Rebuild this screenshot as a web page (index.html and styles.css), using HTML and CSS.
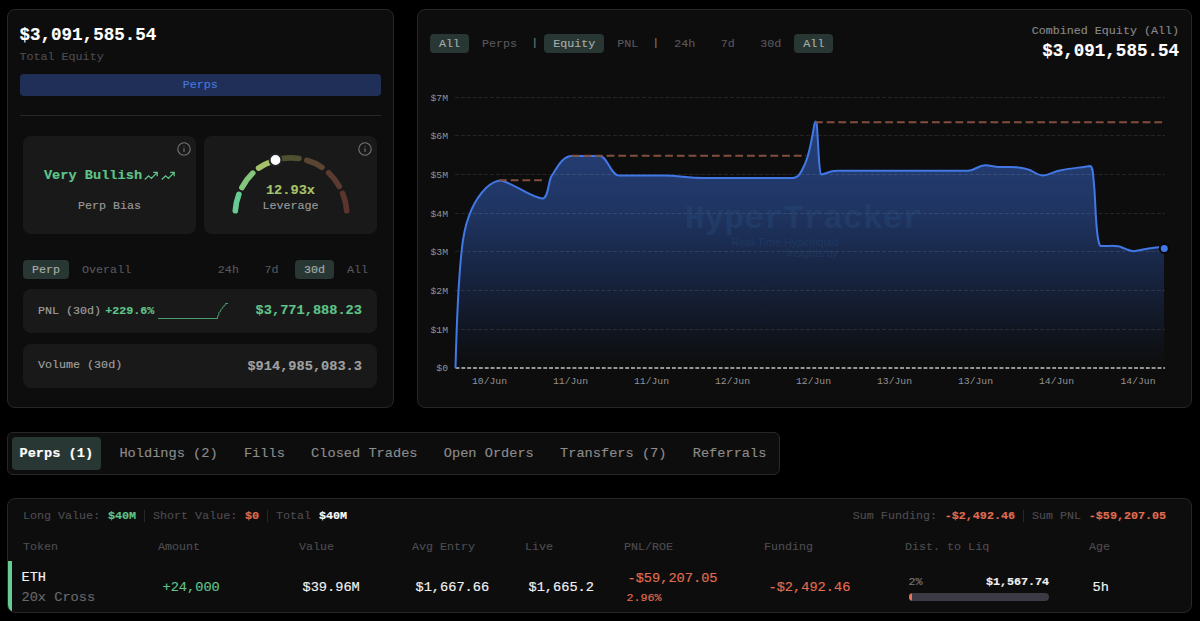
FILE: index.html
```html
<!DOCTYPE html>
<html lang="en">
<head>
  <meta charset="utf-8" />
  <meta name="viewport" content="width=device-width, initial-scale=1.0" />
  <title>HyperTracker</title>
  <link rel="stylesheet" href="styles.css">
</head>
<body>
  <main>
    <div class="top-row">
      <section class="panel summary">
        <div class="equity-value">$3,091,585.54</div>
        <div class="equity-label">Total Equity</div>
        <div class="split-bar">Perps</div>
        <hr>

        <div class="stat-cards">
          <div class="stat-card bias">
            <svg class="info" viewBox="0 0 14 14">
              <circle cx="7" cy="7" r="6.2" />
              <path d="M7 6.3V10M7 4v.8" />
            </svg>
            <div class="bias-value">
              <span>Very Bullish</span>
              <svg class="trend" viewBox="0 0 14 10"><path d="M.8 8.5 4.6 4.8 7.4 7.4 13 1.6M9.2 1.4H13.2V5.2" /></svg>
              <svg class="trend" viewBox="0 0 14 10"><path d="M.8 8.5 4.6 4.8 7.4 7.4 13 1.6M9.2 1.4H13.2V5.2" /></svg>
            </div>
            <div class="stat-label">Perp Bias</div>
          </div>

          <div class="stat-card leverage">
            <svg class="info" viewBox="0 0 14 14">
              <circle cx="7" cy="7" r="6.2" />
              <path d="M7 6.3V10M7 4v.8" />
            </svg>
            <svg class="gauge" viewBox="231 153 120 62">
              <path stroke="#66cc91" d="M235.3 210.8A56 56 0 0 1 238.9 194.3" />
              <path stroke="#84c67c" d="M241.9 187.6A56 56 0 0 1 252.8 173.1" />
              <path stroke="#a5c26a" d="M258.6 168.1A56 56 0 0 1 272 161.3" />
              <path stroke="#4f5030" d="M281 158.8A56 56 0 0 1 299 158.4" />
              <path stroke="#594530" d="M306.8 160.3A56 56 0 0 1 322 167.3" />
              <path stroke="#5b3b30" d="M328.6 172.8A56 56 0 0 1 339.2 186.3" />
              <path stroke="#5c342e" d="M342.7 193.4A56 56 0 0 1 346.7 210.8" />
              <circle cx="275.5" cy="160" r="5.9" />
            </svg>
            <div class="leverage-value">12.93x</div>
            <div class="stat-label">Leverage</div>
          </div>
        </div>

        <div class="filters">
          <span class="pill active">Perp</span>
          <span class="pill">Overall</span>
          <span class="spacer"></span>
          <span class="pill">24h</span>
          <span class="pill">7d</span>
          <span class="pill active">30d</span>
          <span class="pill">All</span>
        </div>

        <div class="metric">
          <span>PNL (30d)</span>
          <span class="metric-change">+229.6%</span>
          <svg class="spark" viewBox="0 0 70 18">
            <path d="M0 16.5H59.5V14L60.8 13.5V10.500L62.500 9.5L62.800 7.500L64.500 6.500L65 4.500L67 3.5L67.500 1.5H70" />
          </svg>
          <span class="metric-value up">$3,771,888.23</span>
        </div>
        <div class="metric volume">
          <span>Volume (30d)</span>
          <span class="metric-value">$914,985,083.3</span>
        </div>
      </section>

      <section class="panel chart-panel">
        <div class="chart-head">
          <div class="filters">
            <span class="pill active">All</span>
            <span class="pill">Perps</span>
            <span class="sep">|</span>
            <span class="pill active">Equity</span>
            <span class="pill">PNL</span>
            <span class="sep">|</span>
            <span class="pill">24h</span>
            <span class="pill">7d</span>
            <span class="pill">30d</span>
            <span class="pill active">All</span>
          </div>
          <div class="combined">
            <div class="combined-label">Combined Equity (All)</div>
            <div class="equity-value">$3,091,585.54</div>
          </div>
        </div>

        <svg class="chart" viewBox="418 80 773 320">
          <defs>
            <linearGradient id="area" x1="0" y1="122" x2="0" y2="368" gradientUnits="userSpaceOnUse">
              <stop offset="0" stop-color="#264079" />
              <stop offset="0.35" stop-color="#1f3563" />
              <stop offset="0.62" stop-color="#172441" />
              <stop offset="0.85" stop-color="#10151f" />
              <stop offset="1" stop-color="#0d0d0d" />
            </linearGradient>
          </defs>
          <path class="area" d="M455.5 368C457 310 459 268 463 240C467 214 475 199 486 188C492 182.5 496 180.5 501 180.5C513 183 530 197 542 198.5C548 199.5 548 184 551 177C557 168 562 156 572 156H600C607 156 611 175.5 619 175.5H664C680 175.5 686 178 704 178H793C799 178 801 172 805 164C810 153 812 137 814.5 124Q815.7 119 816.8 124C818.5 147 819 174 821.5 174.5C826 174 829 170.7 837 170.7H968C975 170.7 978 165.3 985 165.3C992 165.3 995 167.3 1003 167C1015 166.5 1023 167 1031 170.5C1035 173 1039 175.5 1043 175.5C1049 175.5 1053 171.5 1061 170.2C1072 168 1082 167.5 1090 166C1093 166 1093 174 1094.5 190C1096 216 1096 233 1099 243C1100 247 1101 246 1104 246C1113 246 1117 245 1122 247.5C1127 249.5 1130 251.2 1134 251.2C1143 250 1152 246.7 1164 247V368Z" />
          <g class="grid">
            <path d="M455 97.5H1165M455 135.5H1165M455 174.5H1165M455 213.5H1165M455 251.5H1165M455 290.5H1165M455 329.5H1165" />
          </g>
          <g class="watermark">
            <text x="803.5" y="228" class="watermark-name">HyperTracker</text>
            <text x="838" y="245.5" class="watermark-sub">Real-Time Hyperliquid</text>
            <text x="838" y="256.5" class="watermark-sub">Insights by</text>
          </g>
          <path class="axis" d="M455.5 368H1165" />
          <path class="line" d="M455.5 368C457 310 459 268 463 240C467 214 475 199 486 188C492 182.5 496 180.5 501 180.5C513 183 530 197 542 198.5C548 199.5 548 184 551 177C557 168 562 156 572 156H600C607 156 611 175.5 619 175.5H664C680 175.5 686 178 704 178H793C799 178 801 172 805 164C810 153 812 137 814.5 124Q815.7 119 816.8 124C818.5 147 819 174 821.5 174.5C826 174 829 170.7 837 170.7H968C975 170.7 978 165.3 985 165.3C992 165.3 995 167.3 1003 167C1015 166.5 1023 167 1031 170.5C1035 173 1039 175.5 1043 175.5C1049 175.5 1053 171.5 1061 170.2C1072 168 1082 167.5 1090 166C1093 166 1093 174 1094.5 190C1096 216 1096 233 1099 243C1100 247 1101 246 1104 246C1113 246 1117 245 1122 247.5C1127 249.5 1130 251.2 1134 251.2C1143 250 1152 246.7 1164 247" />
          <path class="peak" d="M499 180.3H544M571.5 155.7H806M815 122.3H1163" />
          <circle class="marker" cx="1164.3" cy="248.6" r="4.5" />
          <g class="y-labels">
            <text x="448" y="100.5">$7M</text>
            <text x="448" y="139">$6M</text>
            <text x="448" y="177.5">$5M</text>
            <text x="448" y="216.5">$4M</text>
            <text x="448" y="255">$3M</text>
            <text x="448" y="293.5">$2M</text>
            <text x="448" y="332.5">$1M</text>
            <text x="448" y="371">$0</text>
          </g>
          <g class="x-labels">
            <text x="489.5" y="384">10/Jun</text>
            <text x="570.5" y="384">11/Jun</text>
            <text x="651.5" y="384">11/Jun</text>
            <text x="732.5" y="384">12/Jun</text>
            <text x="813.5" y="384">12/Jun</text>
            <text x="894.5" y="384">13/Jun</text>
            <text x="975.5" y="384">13/Jun</text>
            <text x="1056.5" y="384">14/Jun</text>
            <text x="1138" y="384">14/Jun</text>
          </g>
        </svg>
      </section>
    </div>

    <nav class="panel tabs">
      <span class="tab active">Perps (1)</span>
      <span class="tab">Holdings (2)</span>
      <span class="tab">Fills</span>
      <span class="tab">Closed Trades</span>
      <span class="tab">Open Orders</span>
      <span class="tab">Transfers (7)</span>
      <span class="tab">Referrals</span>
    </nav>

    <section class="panel positions">
      <div class="totals">
        <span>Long Value: <b class="up">$40M</b></span>
        <span>Short Value: <b class="down">$0</b></span>
        <span>Total <b>$40M</b></span>
        <span class="push">Sum Funding: <b class="down">-$2,492.46</b></span>
        <span>Sum PNL <b class="down">-$59,207.05</b></span>
      </div>
      <div class="row head">
        <span>Token</span>
        <span>Amount</span>
        <span>Value</span>
        <span>Avg Entry</span>
        <span>Live</span>
        <span>PNL/ROE</span>
        <span>Funding</span>
        <span>Dist. to Liq</span>
        <span>Age</span>
      </div>
      <div class="row position">
        <div class="token">ETH<small>20x Cross</small></div>
        <div class="up">+24,000</div>
        <div>$39.96M</div>
        <div>$1,667.66</div>
        <div>$1,665.2</div>
        <div class="roe down">-$59,207.05<small>2.96%</small></div>
        <div class="down">-$2,492.46</div>
        <div class="liq">
          <div class="liq-text"><span>2%</span><b>$1,567.74</b></div>
          <div class="liq-bar"><div class="liq-fill" style="width: 2.5%"></div></div>
        </div>
        <div>5h</div>
      </div>
    </section>
  </main>
</body>
</html>
```
FILE: styles.css
```css
/* Base */
* {
  box-sizing: border-box;
}

body {
  margin: 0;
  height: 621px;
  overflow: hidden;
  background: #000;
  color: #f2f2f2;
  font-family: "Liberation Mono", monospace;
  font-size: 11.7px;
  line-height: 16px;
  -webkit-text-stroke: 0.15px;
}

main {
  padding: 9px 8px 8px 7px;
}

.panel {
  background: #0d0d0d;
  border: 1px solid #272727;
  border-radius: 8px;
}

.up {
  color: #5fc48a;
}

.down {
  color: #e06d50;
}

.top-row {
  display: flex;
  justify-content: space-between;
  height: 399px;
}

/* Summary */
.summary {
  width: 387px;
  padding: 13px 12px 0 11.5px;
}

.equity-value {
  font-size: 17.55px;
  font-weight: 700;
  line-height: 24px;
  color: #fff;
}

.equity-label {
  margin-top: 2px;
  color: #4c4c50;
}

.split-bar {
  margin-top: 9px;
  height: 22px;
  line-height: 23px;
  text-align: center;
  border-radius: 4px;
  background: #1f2f57;
  color: #4678dc;
}

hr {
  margin: 19px 0 20px;
  border: 0;
  border-top: 1px solid #272727;
}

.stat-cards {
  display: flex;
  gap: 8px;
  margin: 0 4px 0 3.5px;
}

.stat-card {
  position: relative;
  flex: 1;
  height: 98px;
  border-radius: 8px;
  background: #191919;
  text-align: center;
}

.info {
  position: absolute;
  top: 6px;
  right: 5px;
  width: 14px;
  height: 14px;
  fill: none;
  stroke: #747474;
  stroke-width: 1.1;
}

.bias-value {
  display: flex;
  justify-content: center;
  align-items: center;
  gap: 2px;
  margin: 31px 0 13px;
  font-size: 13.65px;
  font-weight: 700;
  line-height: 18px;
  color: #5fc48a;
}

.trend {
  width: 14px;
  height: 10px;
  fill: none;
  stroke: #5fc48a;
  stroke-width: 1.3;
}

.trend + .trend {
  margin-left: 1px;
}

.stat-label {
  color: #9a9a9a;
}

.gauge {
  position: absolute;
  left: 26.5px;
  top: 17px;
  width: 120px;
  height: 62px;
  overflow: visible;
  fill: none;
  stroke-width: 5.6;
  stroke-linecap: round;
}

.gauge circle {
  fill: #fff;
  stroke: #21222a;
  stroke-width: 2;
}

.leverage-value {
  margin-top: 47px;
  font-size: 13.65px;
  font-weight: 700;
  line-height: 15px;
  color: #a5c26a;
}

.filters {
  display: flex;
  align-items: center;
}

.summary .filters {
  margin: 26px 4px 10px 3.5px;
}

.pill {
  min-width: 39px;
  height: 19px;
  padding: 0 9px;
  line-height: 20px;
  text-align: center;
  border-radius: 4px;
  color: #57575a;
}

.pill + .pill {
  margin-left: 4px;
}

.pill.active {
  background: #283733;
  color: #a6adaa;
}

.spacer {
  flex: 1;
}

.metric {
  display: flex;
  align-items: center;
  height: 44px;
  margin: 0 4px 11px 3.5px;
  padding: 0 15px;
  border-radius: 8px;
  background: #191919;
  color: #a0a0a0;
}

.metric-change {
  margin-left: 4px;
  font-weight: 700;
  color: #5fc48a;
}

.spark {
  width: 70px;
  height: 18px;
  margin-left: 4px;
  fill: none;
  stroke: #4aa06c;
  stroke-width: 1;
}

.metric-value {
  margin-left: auto;
  font-size: 13.65px;
  font-weight: 700;
}

.volume {
  align-items: flex-start;
  padding-top: 13px;
}

.volume .metric-value {
  padding-top: 2px;
}

/* Chart */
.chart-panel {
  width: 775px;
}

.chart-head {
  display: flex;
  justify-content: space-between;
  height: 70px;
  padding: 12px 12px 0;
}

.chart-head .filters {
  height: 42px;
}

.sep {
  width: 7px;
  margin: 0 6px 0 5px;
  color: #77777a;
}

.combined {
  padding-top: 1px;
  text-align: right;
}

.combined-label {
  color: #88888a;
}

.chart {
  display: block;
  width: 773px;
  height: 320px;
}

.area {
  fill: url(#area);
}

.grid {
  fill: none;
  stroke: #fff;
  stroke-opacity: 0.1;
  stroke-dasharray: 3.9 1.95;
}

.axis {
  stroke: #c4c4c4;
  stroke-width: 1.5;
  stroke-dasharray: 3.9 1.95;
}

.line {
  fill: none;
  stroke: #4178e6;
  stroke-width: 2;
}

.peak {
  fill: none;
  stroke: #834d3e;
  stroke-width: 1.9;
  stroke-dasharray: 7.8 3.9;
}

.marker {
  fill: #4178e6;
  stroke: #05070d;
  stroke-width: 2;
}

.y-labels,
.x-labels {
  font-size: 9.75px;
  fill: #929292;
}

.y-labels {
  text-anchor: end;
}

.x-labels {
  text-anchor: middle;
}

.watermark {
  fill: #294f7d;
  opacity: 0.35;
}

.watermark-name {
  font-size: 33px;
  font-weight: 700;
  text-anchor: middle;
}

.watermark-sub {
  font-family: "Liberation Sans", sans-serif;
  font-size: 10.8px;
  text-anchor: end;
}

/* Tabs */
.tabs {
  display: flex;
  align-items: center;
  width: 773px;
  height: 43px;
  margin-top: 24px;
  padding: 0 4px 0 3.5px;
  border-radius: 6px;
}

.tab {
  height: 33px;
  padding: 0 8px;
  font-size: 13.65px;
  line-height: 34px;
  border-radius: 4px;
  color: #8b8b8b;
}

.tab + .tab {
  margin-left: 10.25px;
}

.tab.active {
  background: #283733;
  color: #fff;
  font-weight: 700;
}

/* Positions table */
.positions {
  height: 115px;
  margin-top: 23px;
  overflow: hidden;
}

.totals {
  display: flex;
  padding: 9px 25px 0 15px;
  color: #4c4c50;
}

.totals span + span {
  position: relative;
  margin-left: 17px;
}

.totals span + span::before {
  content: "";
  position: absolute;
  left: -9px;
  top: 2px;
  width: 1px;
  height: 12px;
  background: #272727;
}

.totals .push.push {
  margin-left: auto;
}

.totals .push::before {
  display: none;
}

.totals b {
  margin-left: 0.8px;
}

.totals b:not([class]) {
  color: #fff;
}

.row {
  display: grid;
}

.head {
  grid-template-columns: 135px 141px 113px 113px 99px 140px 141px 184px 1fr;
  padding: 15px 0 0 15px;
  color: #4c4c50;
}

.position {
  grid-template-columns: 141px 140px 113px 113px 99px 141px 140px 184px 1fr;
  align-items: center;
  height: 51px;
  margin-top: 6px;
  padding: 2px 0 0 9.5px;
  border-left: 4px solid #66cc91;
  font-size: 13.65px;
}

.position small {
  display: block;
  font-size: 11.7px;
  line-height: 18px;
}

.token {
  line-height: 20px;
}

.token small {
  font-size: 13.65px;
  line-height: 20px;
  color: #68686a;
}

.roe {
  line-height: 20px;
}

.roe small {
  margin-left: -1px;
}

.liq {
  width: 140.5px;
}

.liq-text {
  display: flex;
  justify-content: space-between;
  font-size: 11.7px;
}

.liq-text span {
  color: #77777f;
}

.liq-text b {
  font-size: 11.7px;
}

.liq-bar {
  height: 8px;
  margin-top: 3px;
  overflow: hidden;
  border-radius: 4px;
  background: #3c3a44;
}

.liq-fill {
  height: 8px;
  border-radius: 4px;
  background: #e8735c;
}
```
